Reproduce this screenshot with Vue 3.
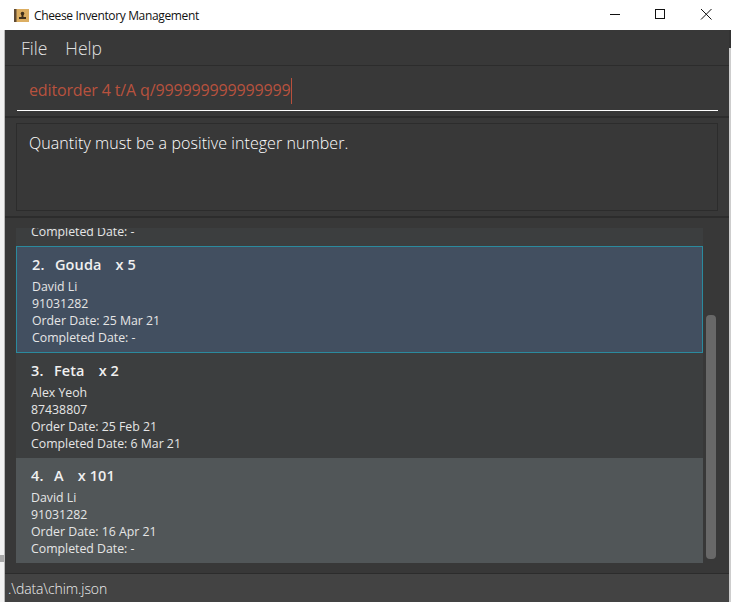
<script setup>
const orders = [
  { id: 2, name: 'Gouda', qty: 'x 5', customer: 'David Li', phone: '91031282', ordered: '25 Mar 21', completed: '-', kind: 'selected' },
  { id: 3, name: 'Feta', qty: 'x 2', customer: 'Alex Yeoh', phone: '87438807', ordered: '25 Feb 21', completed: '6 Mar 21', kind: 'odd' },
  { id: 4, name: 'A', qty: 'x 101', customer: 'David Li', phone: '91031282', ordered: '16 Apr 21', completed: '-', kind: 'even' },
]
</script>

<template>
  <div class="screen">
    <header class="titlebar">
      <svg class="app-icon" width="15" height="15" viewBox="0 0 15 15">
        <rect x="0" y="1" width="15" height="13" fill="#dcae62" />
        <rect x="0" y="1" width="2.500" height="13" fill="#5f4a34" />
        <circle cx="8.500" cy="5.600" r="1.800" fill="#3f2f1c" />
        <rect x="7.500" y="6" width="2" height="3" fill="#3f2f1c" />
        <rect x="5" y="9" width="7" height="2" fill="#3f2f1c" />
      </svg>
      <span class="title">Cheese Inventory Management</span>
      <div class="controls">
        <svg class="ctl" width="46" height="30" viewBox="0 0 46 30"><path d="M19 14.500H29" stroke="#111" fill="none" /></svg>
        <svg class="ctl" width="46" height="30" viewBox="0 0 46 30"><rect x="18.500" y="9.500" width="9" height="9" stroke="#111" fill="none" /></svg>
        <svg class="ctl" width="46" height="30" viewBox="0 0 46 30"><path d="M18 9L28.500 19.500M28.500 9L18 19.500" stroke="#111" fill="none" /></svg>
      </div>
    </header>

    <div class="body">
      <div class="gutter"></div>
      <main class="window">
        <nav class="menu">
          <span>File</span>
          <span>Help</span>
        </nav>

        <section class="command">
          <div class="input">
            <span class="typed">editorder 4 t/A q/999999999999999</span><span class="caret"></span>
          </div>
        </section>

        <section class="result">
          <div class="result-box">Quantity must be a positive integer number.</div>
        </section>

        <section class="list">
          <div class="cells">
            <div class="partial">
              <div class="line">Completed Date: -</div>
            </div>
            <article v-for="o in orders" :key="o.id" class="cell" :class="o.kind">
              <div class="head">
                <span class="num">{{ o.id }}.</span>
                <span class="cheese">{{ o.name }}</span>
                <span class="qty">{{ o.qty }}</span>
              </div>
              <div class="line">{{ o.customer }}</div>
              <div class="line">{{ o.phone }}</div>
              <div class="line">Order Date: {{ o.ordered }}</div>
              <div class="line">Completed Date: {{ o.completed }}</div>
            </article>
          </div>
          <div class="thumb"></div>
        </section>

        <footer class="status">.\data\chim.json</footer>
      </main>
      <div class="edge"></div>
    </div>
  </div>
</template>

<style scoped>
.screen {
  width: 731px;
  height: 602px;
  overflow: hidden;
  display: flex;
  flex-direction: column;
  background: #f0f0f0;
  font-family: "Open Sans", "Noto Sans", sans-serif;
}
.titlebar {
  height: 30px;
  flex: none;
  display: flex;
  align-items: center;
  background: #fff;
  padding-left: 14px;
  box-sizing: border-box;
  color: #111;
}
.app-icon { flex: none; margin-right: 5px; }
.title { font-size: 12px; letter-spacing: -0.36px; }
.controls { margin-left: auto; display: flex; padding-right: 2px; }
.ctl { display: block; }
.body {
  flex: 1;
  min-height: 0;
  display: flex;
}
.gutter {
  width: 4px;
  flex: none;
  background: linear-gradient(#f2f2f2 525px, #a8a8a8 525px, #a8a8a8 532px, #f2f2f2 532px);
  border-right: 1px solid #b8b8b8;
}
.edge {
  width: 2px;
  flex: none;
  background: linear-gradient(#333 18px, #cdcdcd 18px);
}
.window {
  flex: 1;
  min-width: 0;
  display: flex;
  flex-direction: column;
  background: #383838;
}
.menu {
  height: 36px;
  flex: none;
  box-sizing: border-box;
  display: flex;
  align-items: center;
  gap: 18px;
  padding-left: 16px;
  font-size: 17.500px;
  font-weight: 300;
  color: #e2e2e2;
  border-bottom: 1px solid #2c2c2c;
}
.command {
  height: 52px;
  flex: none;
  box-sizing: border-box;
  padding: 0 11px 0 12px;
  border-bottom: 2px solid #2c2c2c;
}
.input {
  height: 45px;
  box-sizing: border-box;
  border-bottom: 1px solid #fff;
  padding: 11px 0 0 12px;
  display: flex;
  align-items: flex-start;
  font-size: 16px;
  letter-spacing: -0.14px;
  line-height: 26px;
  color: #b8523e;
}
.caret { width: 1px; height: 26px; background: #b8503c; margin-top: 1px; }
.result {
  height: 100px;
  flex: none;
  box-sizing: border-box;
  padding: 5px 11px 0;
  border-bottom: 2px solid #2c2c2c;
}
.result-box {
  height: 88px;
  box-sizing: border-box;
  border: 1px solid #2c2c2c;
  padding: 7px 12px;
  font-size: 16px;
  font-weight: 300;
  letter-spacing: 0.07px;
  line-height: 24px;
  color: #fff;
}
.list {
  position: relative;
  height: 356px;
  flex: none;
  box-sizing: border-box;
  padding: 10px 26px 10px 11px;
  border-bottom: 1px solid #2c2c2c;
}
.cells { display: flex; flex-direction: column; }
.partial {
  height: 18px;
  overflow: hidden;
  display: flex;
  align-items: flex-end;
  background: #3c3e3f;
  padding: 0 0 6px 15px;
  box-sizing: border-box;
}
.cell {
  height: 105px;
  box-sizing: border-box;
  padding: 5px 15px 0;
  color: #eee;
}
.selected {
  height: 107px;
  border: 1px solid #2b8a9e;
  background: #424f60;
  padding: 5px 15px 0;
}
.odd { background: #3c3e3f; }
.even { background: #515658; }
.head {
  height: 25px;
  margin-bottom: 1px;
  display: flex;
  align-items: center;
  font-size: 14.500px;
  font-weight: 600;
  letter-spacing: 0.1px;
  color: #f0f0f0;
}
.num { width: 23px; }
.cheese { margin-right: 14px; }
.line {
  font-size: 12.300px;
  line-height: 17px;
  height: 17px;
  color: #e6e6e6;
  white-space: nowrap;
}
.thumb {
  position: absolute;
  left: 701px;
  top: 97px;
  width: 10px;
  height: 244px;
  border-radius: 4px;
  background: #686868;
}
.status {
  flex: 1;
  background: #434343;
  padding-left: 3px;
  font-size: 14px;
  font-weight: 300;
  letter-spacing: -0.1px;
  line-height: 30px;
  color: #eee;
}
</style>
